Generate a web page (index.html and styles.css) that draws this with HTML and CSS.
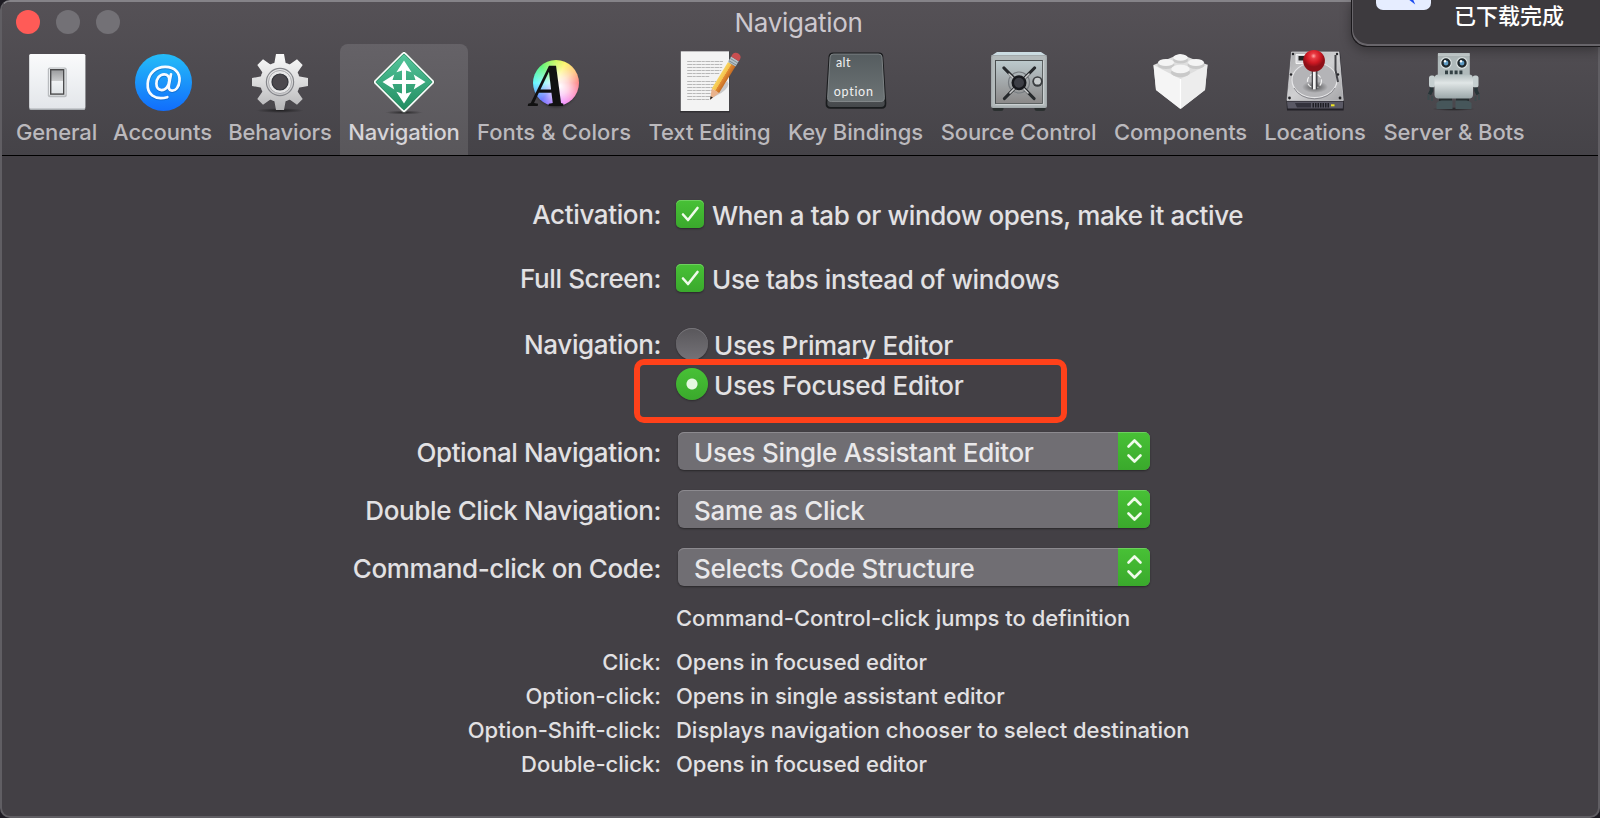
FILE: index.html
```html
<!DOCTYPE html>
<html lang="en">
<head>
<meta charset="utf-8">
<title>Navigation</title>
<link rel="stylesheet" href="styles.css">
</head>
<body>
<div class="window">
  <header class="chrome">
    <div class="titlebar">
      <div class="lights"><i class="light close"></i><i class="light"></i><i class="light"></i></div>
      <h1 class="title">Navigation</h1>
    </div>
    <nav class="toolbar">
      <a class="tool"><svg class="icon" viewBox="0 0 64 64">
        <defs>
          <linearGradient id="plate" x1="0" y1="0" x2="0" y2="1"><stop offset="0" stop-color="#fafbfc"/><stop offset="1" stop-color="#e3e6ea"/></linearGradient>
          <linearGradient id="rocker" x1="0" y1="0" x2="0" y2="1"><stop offset="0" stop-color="#9a9b9d"/><stop offset=".45" stop-color="#c9cacb"/><stop offset=".46" stop-color="#f0f2f4"/><stop offset="1" stop-color="#dfe3e6"/></linearGradient>
        </defs>
        <rect x="4.3" y="4" width="56" height="56" rx="1.5" fill="#a9adb1"/><rect x="4.3" y="4" width="56" height="54.6" rx="1.5" fill="url(#plate)"/>
        <rect x="22.8" y="17.6" width="19" height="29.6" rx="2" fill="#b9bcbf"/><rect x="24" y="18.5" width="16.5" height="27" rx="1.5" fill="#eceef0"/>
        <rect x="25.7" y="19.7" width="13" height="24.4" fill="url(#rocker)" stroke="#4a4a4c" stroke-width="1.4"/></svg><span>General</span></a>
      <a class="tool"><svg class="icon" viewBox="0.5 0 64 64">
        <defs><linearGradient id="blue" x1="0" y1="0" x2="0" y2="1"><stop offset="0" stop-color="#25bdf8"/><stop offset="1" stop-color="#116dfc"/></linearGradient></defs>
        <circle cx="33" cy="32.4" r="28.5" fill="url(#blue)"/>
        <path transform="translate(.3 1)" fill="none" stroke="#0b5bb8" stroke-opacity=".5" stroke-width="2.8" stroke-linecap="round" d="M36.8 47.2C23.5 50.5 16.5 44 17.2 33.5 18 23 25.5 16.7 35 16.9c9.3.2 14.7 5.9 14 14-.5 6.3-3.9 10-7.5 9.8-3-.2-3.7-2.6-3-5.9l2-10.5M38.8 30.5c.2-4-2-6.3-5.2-6.2-4.5.1-7.7 4.3-7.7 9.5 0 4 2 6.4 5.3 6.3 4.3-.1 7.2-4.4 7.6-9.6"/>
        <path fill="none" stroke="#f8fbff" stroke-width="2.7" stroke-linecap="round" d="M36.8 47.2C23.5 50.5 16.5 44 17.2 33.5 18 23 25.5 16.7 35 16.9c9.3.2 14.7 5.9 14 14-.5 6.3-3.9 10-7.5 9.8-3-.2-3.7-2.6-3-5.9l2-10.5M38.8 30.5c.2-4-2-6.3-5.2-6.2-4.5.1-7.7 4.3-7.7 9.5 0 4 2 6.4 5.3 6.3 4.3-.1 7.2-4.4 7.6-9.6"/></svg><span>Accounts</span></a>
      <a class="tool"><svg class="icon" viewBox="0 0 64 64">
        <defs><linearGradient id="gear" gradientUnits="userSpaceOnUse" x1="0" y1="4" x2="0" y2="60"><stop offset="0" stop-color="#fafafa"/><stop offset=".5" stop-color="#dcdcdd"/><stop offset="1" stop-color="#b4b4b6"/></linearGradient>
        <radialGradient id="shade"><stop offset="0" stop-color="#000" stop-opacity=".55"/><stop offset="1" stop-color="#000" stop-opacity="0"/></radialGradient></defs>
        <ellipse cx="32" cy="60.5" rx="24" ry="2.5" fill="url(#shade)"/>
        <g fill="url(#gear)"><path d="M26 15 28 4h8l2 11zM26 49l2 11h8l2-11zM15 26 4 28v8l11 2zM49 26l11 2v8l-11 2zM15.7 24.2 9.3 15l5.7-5.7 9.2 6.4zM48.3 24.2l6.4-9.2L49 9.3l-9.2 6.4zM15.7 39.8 9.3 49l5.7 5.7 9.2-6.4zM48.3 39.8l6.4 9.2-5.7 5.7-9.2-6.4z"/><circle cx="32" cy="32" r="20"/></g>
        <circle cx="32" cy="32" r="13.6" fill="none" stroke="#85868b" stroke-width="1.2"/><circle cx="32" cy="32" r="11.5" fill="#e6e6e7" stroke="#aaaaae" stroke-width="1"/><circle cx="32" cy="32" r="8" fill="#4b484d" stroke="#303238" stroke-width="1.2"/></svg><span>Behaviors</span></a>
      <a class="tool selected"><svg class="icon" viewBox="0 0 64 64">
        <defs><linearGradient id="green" x1="0" y1="0" x2="1" y2="1"><stop offset="0" stop-color="#55c69c"/><stop offset="1" stop-color="#218c60"/></linearGradient></defs>
        <ellipse cx="32" cy="62.5" rx="19" ry="2" fill="url(#shade)"/>
        <rect x="9.7" y="9.7" width="44.6" height="44.6" rx="2.3" transform="rotate(45 32 32)" fill="#fff" stroke="#3f4943" stroke-width=".8"/>
        <rect x="12" y="12" width="40" height="40" rx="1" transform="rotate(45 32 32)" fill="url(#green)" stroke="#168153" stroke-width=".8"/>
        <path d="M32 10.5l7.6 11.8-5.6-1.8v9.500h9.500l-1.800-5.600L53.500 32l-11.800 7.600 1.800-5.600H34v9.500l5.600-1.800L32 53.500l-7.600-11.800 5.600 1.800V34h-9.500l1.800 5.600L10.500 32l11.800-7.600-1.800 5.600H30v-9.500l-5.600 1.800z" fill="#fff"/></svg><span>Navigation</span></a>
      <a class="tool"><span class="icon wheel"><i class="disc"></i><b class="letter">A</b></span><span class="wide">Fonts &amp; Colors</span></a>
      <a class="tool"><svg class="icon" viewBox="0.8 0 64 64">
        <defs><linearGradient id="pencil" x1="0" y1="0" x2="1" y2="0"><stop offset="0" stop-color="#f8d45d"/><stop offset=".45" stop-color="#f4c24e"/><stop offset=".5" stop-color="#e38b32"/><stop offset="1" stop-color="#c56d24"/></linearGradient></defs>
        <rect x="2.8" y="1.5" width="50" height="61" fill="#323034"/><rect x="3.5" y="1.3" width="48.4" height="59.7" fill="#f3f3f3"/>
        <path stroke="#b8b8b8" stroke-width="1.1" d="M10 11.5h36M10 14.5h35M10 17.5h35M10 20.5h34M10 23.5h32M10 26.5h22M10 31.5h29M10 34.5h28M10 37.5h29M10 40.5h26M10 43.5h26M10 46.5h27M10 49.5h22" stroke-dasharray="5 .5 3 .6"/>
        <path d="M33 49 50 31q4 5-6 12z" fill="#777" opacity=".35"/>
        <g transform="translate(32.8 49.7) rotate(31.5) scale(1.2 1.04)"><path d="M0 0-3.6-10h7.2z" fill="#e9b28c"/><path d="M0 0-1.100-3.200h2.200z" fill="#222"/><path d="M-3.600-10v-30h7.200v30z" fill="url(#pencil)"/><path d="M-3.700-40v-6h7.400v6z" fill="#b5c2c7"/><path d="M-3.700-41.500h7.400M-3.700-44h7.400" stroke="#7a888e" stroke-width=".8"/><path d="M-3.700-46v-2.500a3.700 3.700 0 0 1 7.400 0V-46z" fill="#c84e50"/></g></svg><span>Text Editing</span></a>
      <a class="tool"><svg class="icon" viewBox="0 0 64 64">
        <defs><linearGradient id="key" x1="0" y1="0" x2="0" y2="1"><stop offset="0" stop-color="#555c5f"/><stop offset="1" stop-color="#6d7476"/></linearGradient><linearGradient id="keyside" x1="0" y1="0" x2="0" y2="1"><stop offset="0" stop-color="#777d7f"/><stop offset="1" stop-color="#45484b"/></linearGradient></defs>
        <path d="M9 2.500h46q4 0 4.300 4l3 46.500q.3 5.800-4.600 5.800H6.500Q1.300 58.800 1.600 53L4.500 6.500q.5-4 4.500-4z" fill="#1a1c1e"/>
        <path d="M8 5h48l4.700 48q.3 4-3.600 4H6.900Q3 57 3.300 53z" fill="url(#keyside)"/>
        <path d="M9.500 4h45q3.200 0 3.500 3l2.400 40.500q.1 4-3.900 4h-49q-4 0-3.900-4L6 7q.3-3 3.500-3z" fill="url(#key)" stroke="#8b9193" stroke-width=".8"/>
        <text x="12" y="17" font-size="12.5" letter-spacing=".4">alt</text><text x="9.8" y="46" font-size="12.5" letter-spacing=".7">option</text></svg><span>Key Bindings</span></a>
      <a class="tool"><svg class="icon" viewBox="0 0 64 64">
        <defs><linearGradient id="steel" x1="0" y1="0" x2="0" y2="1"><stop offset="0" stop-color="#bccacd"/><stop offset=".5" stop-color="#a3a8aa"/><stop offset="1" stop-color="#8a8888"/></linearGradient></defs>
        <rect x="5.5" y="56" width="11" height="5" rx="2.5" fill="#2b3030"/><rect x="47.5" y="56" width="11" height="5" rx="2.5" fill="#2b3030"/>
        <path d="M10 2h44l6 4H4z" fill="#cbdce2"/><rect x="4" y="5" width="56" height="53" rx="2" fill="#a3aaac"/><rect x="5.3" y="6" width="53.4" height="50.5" rx="1" fill="#b3babb"/>
        <rect x="8.5" y="10.500" width="47" height="43" fill="url(#steel)" stroke="#4a4e4f" stroke-width="1"/><path d="M8.5 54.3h47.800V10.500" fill="none" stroke="#dfe3e4" stroke-width=".7"/>
        <circle cx="32" cy="32.5" r="10.5" fill="none" stroke="#777c80" stroke-width="1.2"/>
        <g stroke-linecap="round"><path d="M17 18l30 30.5M47.500 18 17.500 48.500" stroke="#26292c" stroke-width="3.2"/><path d="M22 24l19 19M42 24 23 43" stroke="#c9cbcc" stroke-width="1.6"/></g>
        <circle cx="32" cy="32.7" r="7.5" fill="#17191d"/><circle cx="32" cy="32.7" r="5" fill="#3c3e45"/><circle cx="50.5" cy="31.500" r="5.200" fill="#3b3e40"/><circle cx="50.500" cy="31.200" r="3.400" fill="#c8cccd"/></svg><span>Source Control</span></a>
      <a class="tool"><svg class="icon" viewBox="0 0 64 64">
        <path d="M4.500 15 31 4l27.500 10.700L56 40 31.500 59 7 40z" fill="#dedede"/><path d="M4.500 15 31.500 29V59L7 40z" fill="#f5f5f5"/><path d="M58.500 14.500 31.500 29V59L56 40z" fill="#ededed"/><path d="M31.500 29v29" stroke="#fff" stroke-width="1.2"/>
        <g fill="#c9c9c9"><ellipse cx="31.5" cy="10" rx="7.5" ry="3.6"/><ellipse cx="17" cy="15" rx="8.5" ry="4"/><ellipse cx="47" cy="15" rx="8.5" ry="4"/><ellipse cx="31.5" cy="22.5" rx="9.6" ry="4.7"/></g>
        <g fill="#f4f4f4"><ellipse cx="31.5" cy="7.500" rx="7.200" ry="3.200"/><ellipse cx="17" cy="12.500" rx="8" ry="3.600"/><ellipse cx="47" cy="12.500" rx="8" ry="3.600"/><ellipse cx="31.500" cy="19" rx="9.200" ry="4.300"/></g></svg><span>Components</span></a>
      <a class="tool"><svg class="icon" viewBox="0 0 64 64">
        <defs><linearGradient id="drive" x1="0" y1="0" x2="1" y2="1"><stop offset="0" stop-color="#ababad"/><stop offset=".5" stop-color="#d0d0d2"/><stop offset="1" stop-color="#a5a5a8"/></linearGradient><radialGradient id="ball" cx=".48" cy=".28"><stop offset="0" stop-color="#ffaaa9"/><stop offset=".25" stop-color="#e93a42"/><stop offset=".65" stop-color="#cd1822"/><stop offset="1" stop-color="#8e1018"/></radialGradient></defs>
        <path d="M8 2h49l4 49-.4 9.500H4L3.500 51z" fill="#222127"/><path d="M8.500 2h47.500l4.300 48.500H4z" fill="url(#drive)" stroke="#dadadd" stroke-width=".7"/><path d="M4 51.500h56.300l-.5 7H4.700z" fill="#5a5965"/><path d="M12 53h16v4.500H14z" fill="#33323c"/><path d="M29.500 55.300h17" stroke="#1f1f25" stroke-width="4.5" stroke-dasharray="1.5 1"/><rect x="48" y="54.3" width="3.5" height="2" fill="#efe622"/>
        <ellipse cx="31.5" cy="30" rx="22.5" ry="17.500" fill="#b4b4b7" stroke="#e5e5e7" stroke-width="1.2"/><path d="M11 38a22 17 0 0 0 41 0" fill="none" stroke="#88888d"/>
        <path d="M22.500 4.500H13v9h8" fill="#d9d9dc" stroke="#f3f3f3"/><rect x="15.500" y="6" width="8" height="4.500" fill="#222"/><path d="M52.500 5v15l2.500 12" fill="none" stroke="#444449" stroke-width="2"/>
        <g fill="#242428"><circle cx="10" cy="4" r="1.200"/><circle cx="54" cy="4" r="1.200"/><circle cx="8" cy="24.500" r="1.200"/><circle cx="55" cy="24.500" r="1.200"/><circle cx="6.500" cy="48" r="1.400"/><circle cx="57" cy="48" r="1.400"/></g>
        <ellipse cx="32" cy="37" rx="13" ry="6" fill="url(#shade)"/><circle cx="31.500" cy="31" r="7" fill="none" stroke="#f0f0f0" stroke-width="1.200" stroke-dasharray="5 2"/>
        <path d="M28.700 19h5.800v19.500q-2.900 2.500-5.800 0z" fill="#47474b"/><path d="M30 19h2.700v20.500H30z" fill="#f4f4f4"/><circle cx="31" cy="10.800" r="10.900" fill="url(#ball)"/></svg><span>Locations</span></a>
      <a class="tool"><svg class="icon" viewBox="0 0 64 64">
        <defs><linearGradient id="bot" x1="0" y1="0" x2="0" y2="1"><stop offset="0" stop-color="#b4bfc0"/><stop offset=".35" stop-color="#e0e6e6"/><stop offset="1" stop-color="#9ba7a9"/></linearGradient></defs>
        <ellipse cx="31.500" cy="59" rx="22" ry="2" fill="url(#shade)"/>
        <rect x="15.800" y="3" width="32" height="23" rx="1" fill="#b0babb"/><path d="M16 3h31.600v3H16z" fill="#c9d1d2"/>
        <g fill="#344145"><rect x="23" y="20.500" width="3" height="4"/><rect x="27.800" y="20.500" width="3" height="4"/><rect x="32.600" y="20.500" width="3" height="4"/><rect x="37.400" y="20.500" width="3" height="4"/></g>
        <g fill="#20282c" stroke="#dce3e3" stroke-width="1.200"><circle cx="24" cy="13" r="5.300"/><circle cx="40" cy="13" r="5.300"/></g><g fill="#5f9cc5"><circle cx="24" cy="13" r="2.400"/><circle cx="40" cy="13" r="2.400"/></g><g fill="#fff"><circle cx="23" cy="11.300" r="1.200"/><circle cx="39" cy="11.300" r="1.200"/></g>
        <rect x="7" y="25.500" width="6" height="12" rx="2.500" fill="#c5cfd0"/><rect x="50.500" y="25.500" width="6" height="12" rx="2.500" fill="#c5cfd0"/>
        <path d="M9.500 37.500v3l-2 4M54 37.500v3l2 4" fill="none" stroke="#273538" stroke-width="3.500"/><path d="M6.500 44.500v5.500M10 46v5M57 44.500v5.500M53.500 46v5" stroke="#3d4a4d" stroke-width="2"/>
        <rect x="17" y="47" width="13" height="4" fill="#272e30"/><rect x="34" y="47" width="13" height="4" fill="#272e30"/><rect x="12.500" y="24.500" width="38.500" height="24" rx="4" fill="url(#bot)"/>
        <path d="M14.500 53q2-2.500 5-2.500h11V59h-16zM49.500 53q-2-2.500-5-2.500h-11V59h16z" fill="#46565a"/></svg><span>Server &amp; Bots</span></a>
    </nav>
  </header>
  <main class="prefs">
    <section class="row r1"><label>Activation:</label><div class="choice"><i class="check"><svg viewBox="0 0 28 28"><path d="M7 14.500l5 5.500L21.500 8"/></svg></i><span>When a tab or window opens, make it active</span></div></section>
    <section class="row r2"><label>Full Screen:</label><div class="choice"><i class="check"><svg viewBox="0 0 28 28"><path d="M7 14.500l5 5.500L21.500 8"/></svg></i><span>Use tabs instead of windows</span></div></section>
    <section class="row r3"><label>Navigation:</label><div class="choice"><i class="radio"></i><span>Uses Primary Editor</span></div></section>
    <section class="row r4"><label></label><div class="choice"><i class="radio on"></i><span>Uses Focused Editor</span><div class="highlight"></div></div></section>
    <section class="row menu-row"><label>Optional Navigation:</label><div class="select"><span>Uses Single Assistant Editor</span><i class="stepper"><svg viewBox="0 0 32 38"><path d="M10.500 14.500l6-6 6 6M10.500 23.500l6 6 6-6"/></svg></i></div></section>
    <section class="row menu-row"><label>Double Click Navigation:</label><div class="select"><span>Same as Click</span><i class="stepper"><svg viewBox="0 0 32 38"><path d="M10.500 14.500l6-6 6 6M10.500 23.500l6 6 6-6"/></svg></i></div></section>
    <section class="row menu-row"><label>Command-click on Code:</label><div class="select"><span>Selects Code Structure</span><i class="stepper"><svg viewBox="0 0 32 38"><path d="M10.500 14.500l6-6 6 6M10.500 23.500l6 6 6-6"/></svg></i></div></section>
    <dl class="help">
      <dt></dt><dd class="lead">Command-Control-click jumps to definition</dd>
      <dt>Click:</dt><dd>Opens in focused editor</dd>
      <dt>Option-click:</dt><dd>Opens in single assistant editor</dd>
      <dt>Option-Shift-click:</dt><dd>Displays navigation chooser to select destination</dd>
      <dt>Double-click:</dt><dd>Opens in focused editor</dd>
    </dl>
  </main>
</div>
<aside class="toast"><i class="app"><svg viewBox="0 0 56 10"><path d="M34 0l6 4.500L38 0z" fill="#1c4cf0"/></svg></i><p>已下载完成</p></aside>
</body>
</html>
```
FILE: styles.css
```css
* { box-sizing: border-box; }
body { margin: 0; width: 1600px; height: 818px; overflow: hidden; position: relative; background: #1d1b22; font-family: Inter, "Liberation Sans", sans-serif; font-weight: 450; color: #e2e1e3; }
.window { height: 818px; border: 2px solid #605e63; border-top-color: #858388; border-radius: 10px; background: #434045; overflow: hidden; }
.chrome { height: 154px; border-bottom: 1px solid #000; background: linear-gradient(#555156, #454348); display: flex; flex-direction: column; }
.titlebar { height: 42px; display: grid; grid-template-columns: 1fr auto 1fr; align-items: start; }
.lights { display: flex; gap: 16px; padding: 8px 0 0 14px; }
.light { width: 24px; height: 24px; border-radius: 50%; background: #737176; }
.close { background: #ff5b57; }
.title { margin: 5px 3px 0 0; font-size: 26px; line-height: 32px; font-weight: 400; letter-spacing: -.3px; color: #cdc8ce; }
.toolbar { flex: 1; padding-left: 6px; display: grid; grid-template-columns: 97px 115px 120px 128px 172px 139px 153px 173px 151px 118px 160px; }
.tool { display: flex; flex-direction: column; align-items: center; padding-top: 6px; font-size: 22px; line-height: 28px; color: #bbb9bd; white-space: nowrap; letter-spacing: -.12px; }
.wide { letter-spacing: .12px; }
.selected { background: linear-gradient(#656267, #59575b); border-radius: 8px 8px 0 0; color: #d6d4d8; }
.icon { width: 64px; height: 64px; margin-bottom: 4px; display: block; overflow: visible; flex: none; }
.icon text { fill: #f1f1f1; font-family: Lato, sans-serif; font-weight: 400; }
.wheel { position: relative; padding: 10px 0 0 11px; }
.disc { display: block; width: 46px; height: 46px; border-radius: 50%; box-shadow: 0 3px 3px -2px #0007; background: radial-gradient(circle at 58% 56%, #fff 0, #fffb 25%, #fff5 50%, #fff0 80%), conic-gradient(#c6f64b, #fff34f 25deg, #ffb35c 60deg, #ff5252 90deg, #ff5fae 125deg, #ed60ff 160deg, #4a58ff 220deg, #52f7ff 270deg, #53f36b 320deg, #c6f64b); }
.letter { position: absolute; left: 1px; top: 4px; font: 700 61px/64px "Liberation Serif", serif; letter-spacing: 0; color: #111; transform: skewX(-10deg) scaleX(.82); transform-origin: 50% 84%; }
.prefs { padding-top: 42px; font-size: 26px; line-height: 32px; letter-spacing: -.37px; }
.row { display: grid; grid-template-columns: 659px 1fr; column-gap: 15px; white-space: nowrap; }
.row label { text-align: right; padding-top: 1px; }
.choice { display: flex; position: relative; }
.r1 { height: 64px; }
.r2 { height: 66px; }
.r3 { height: 40px; }
.r4 { height: 64px; }
.choice span { padding-top: 2px; }
.check { width: 28px; height: 28px; margin: 2px 8px 0 0; border-radius: 5px; background: linear-gradient(#48c136, #3aa92c); box-shadow: inset 0 1px #6dd05e, 0 1px 2px #0006; }
.check svg, .stepper svg { display: block; fill: none; stroke: #effbea; stroke-width: 2.6; stroke-linecap: round; stroke-linejoin: round; }
.radio { width: 32px; height: 32px; margin: 0 6px 0 0; border-radius: 50%; background: linear-gradient(#59575b, #747277); box-shadow: 0 1px 2px #0005, inset 0 1px #77757a; }
.radio.on { background: radial-gradient(circle, #e4f8df 5px, #fff0 6px), linear-gradient(#48c136, #3aa92c); box-shadow: 0 1px 2px #0005; }
.r4 .choice span { letter-spacing: -.3px; }
.highlight { position: absolute; left: -42px; top: -9px; width: 433px; height: 64px; border: 6px solid #ff411a; border-radius: 10px; }
.menu-row { height: 58px; }
.menu-row label { padding-top: 5px; }
.select { width: 472px; height: 38px; margin-left: 2px; border-radius: 6px; display: flex; justify-content: space-between; background: #706e73; overflow: hidden; box-shadow: inset 0 1px #8c8a8f, 0 1px 2px #0006; letter-spacing: -.3px; }
.select span { padding: 5px 0 0 16px; color: #e9e8ea; }
.stepper { width: 32px; background: linear-gradient(#48c136, #3aa92c); box-shadow: inset 0 1px #6dd05e; }
.help { margin: -5px 0 0; display: grid; grid-template-columns: 659px 1fr; column-gap: 15px; font-size: 22px; line-height: 34px; letter-spacing: -.01px; white-space: nowrap; }
.help dt { text-align: right; }
.help dd { margin: 0; }
.help .lead { height: 44px; }
.toast { position: absolute; right: 0; top: 0; width: 249px; height: 47px; border: 1px solid #1a181b; border-width: 0 0 1px 1px; border-radius: 0 0 0 16px; background: #3d3a3e; box-shadow: inset 1px -2px #68656a, 0 3px 12px #0005; display: flex; }
.app { width: 55px; height: 10px; margin: 0 23px 0 24px; border-radius: 0 0 7px 7px; background: #e6edff; overflow: hidden; }
.app svg { display: block; }
.toast p { margin: -1px 0 0; font: 500 22px/30px "Noto Sans CJK SC", sans-serif; color: #fff; }
```
